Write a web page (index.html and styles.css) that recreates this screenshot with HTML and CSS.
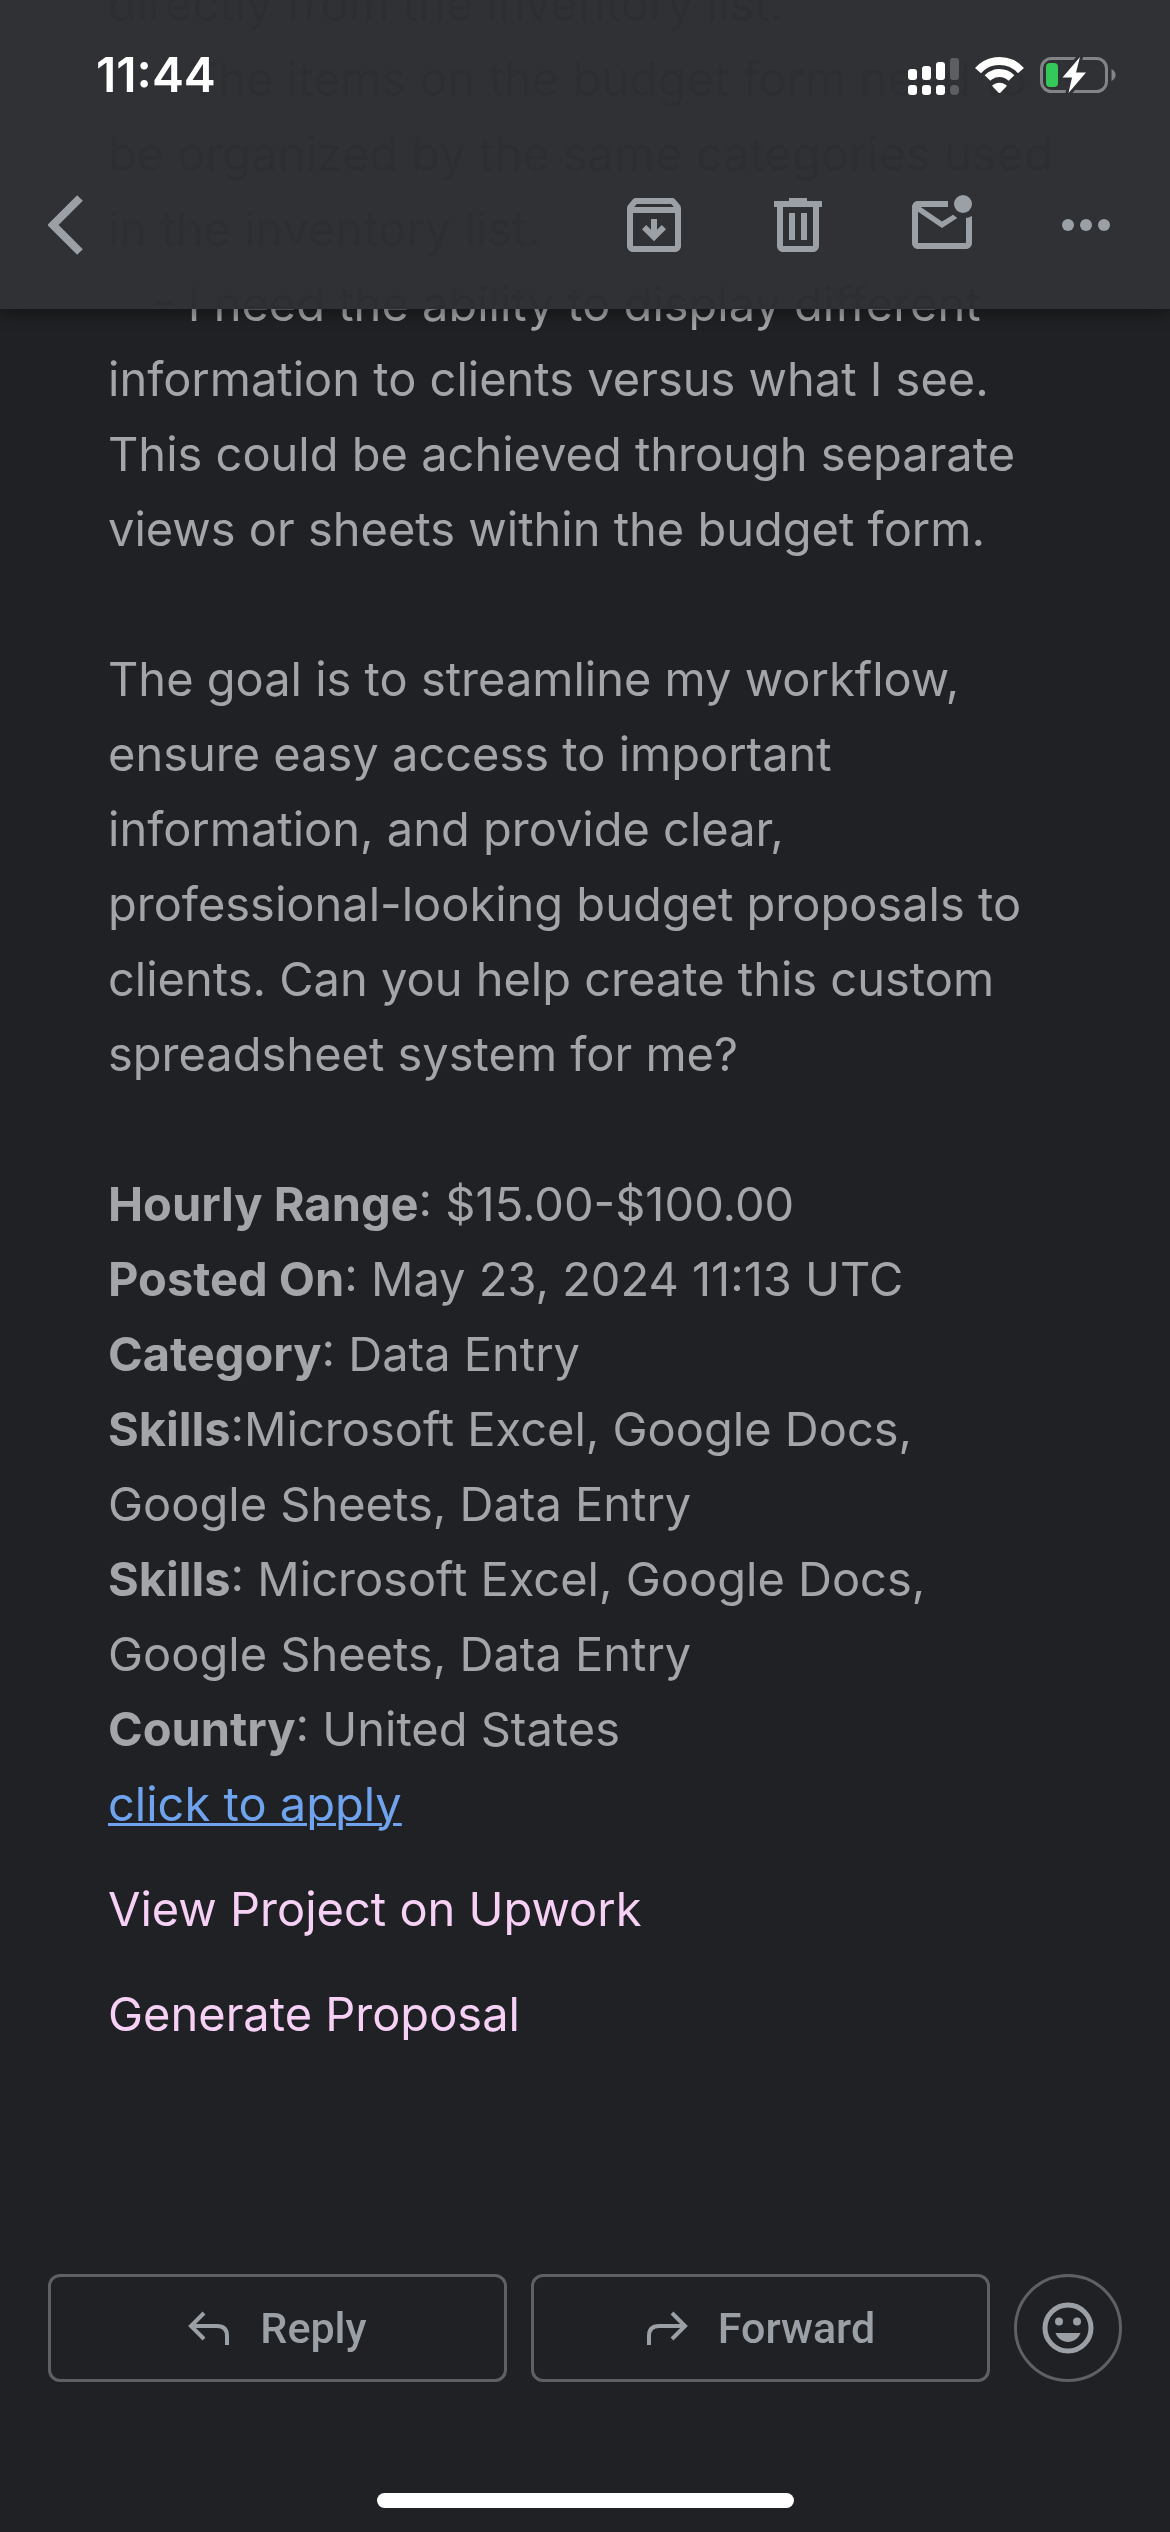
FILE: index.html
```html
<!DOCTYPE html>
<html lang="en">

<head>
    <meta charset="UTF-8">
    <meta name="viewport" content="width=device-width, initial-scale=1.0">
    <title>Mail</title>
    <link rel="stylesheet" href="styles.css">
</head>

<body>
    <header class="top">
        <div class="status">
            <time class="clock">11:44</time>
            <div class="status-icons">
                <svg class="signal" viewBox="0 0 51 38" aria-hidden="true">
                    <rect x="0" y="13" width="9" height="11" rx="3" />
                    <rect x="14" y="10" width="9" height="14" rx="3" />
                    <rect x="28" y="6" width="9" height="18" rx="3" />
                    <rect class="off" x="42" y="2" width="9" height="22" rx="3" />
                    <rect x="0" y="29" width="9" height="10" rx="3" />
                    <rect x="14" y="29" width="9" height="10" rx="3" />
                    <rect x="28" y="29" width="9" height="10" rx="3" />
                    <rect class="off" x="42" y="29" width="9" height="10" rx="4" />
                </svg>
                <svg class="wifi" viewBox="0 0 49 38" aria-hidden="true">
                    <path class="arc" d="M3 14.6A29 29 0 0 1 46 14.6M12.5 22A17 17 0 0 1 36.5 22" />
                    <path d="M25.6 36.4L31.4 30.4Q32 29.6 31.2 29Q24.5 24.4 17.8 29Q17 29.6 17.6 30.4L23.4 36.4Q24.5 37.6 25.6 36.4Z" />
                </svg>
                <svg class="battery" viewBox="0 0 76 40" aria-hidden="true">
                    <rect class="shell" x="1.5" y="3.5" width="65" height="33" rx="10" />
                    <path class="nub" d="M71.5 14C77 17 77 23 71.5 26Z" />
                    <rect class="level" x="6" y="8" width="12" height="24" rx="4" />
                    <path class="bolt" d="M40 2L22.5 22.5H32L28.5 38L46 17.5H36Z" />
                </svg>
            </div>
        </div>
        <nav class="toolbar">
            <button class="icon-btn back" aria-label="Back">
                <svg viewBox="0 0 36 60"><path d="M32 3L5 30L32 57" /></svg>
            </button>
            <div class="actions">
                <button class="icon-btn" aria-label="Archive">
                    <svg viewBox="0 0 24 24"><path d="M20.54 5.23l-1.39-1.68C18.88 3.21 18.47 3 18 3H6c-.47 0-.88.21-1.16.55L3.46 5.23C3.17 5.57 3 6.02 3 6.5V19c0 1.1.9 2 2 2h14c1.1 0 2-.9 2-2V6.5c0-.48-.17-.93-.46-1.27zM6.24 5h11.52l.83 1H5.42l.82-1zM5 19V8h14v11H5zm8-9h-2v3.6L9.4 12 8 13.4l4 4 4-4-1.4-1.4-1.6 1.6z" /></svg>
                </button>
                <button class="icon-btn" aria-label="Delete">
                    <svg viewBox="0 0 24 24"><path d="M15 4V3H9v1H4v2h1v13c0 1.1.9 2 2 2h10c1.1 0 2-.9 2-2V6h1V4h-5zm2 15H7V6h10v13zM9 8h2v9H9zm4 0h2v9h-2z" /></svg>
                </button>
                <button class="icon-btn" aria-label="Mark as unread">
                    <svg viewBox="0 0 24 24"><path d="M22 8.98V18c0 1.1-.9 2-2 2H4c-1.1 0-2-.9-2-2V6c0-1.1.9-2 2-2h10v2H4.9L12 10.8l3.7-2.2 1.4 1.1L12 13 4 7.6V18h16V9.7c.7-.15 1.4-.4 2-.72z" /><circle cx="19" cy="5" r="3" /></svg>
                </button>
                <button class="icon-btn" aria-label="More options">
                    <svg viewBox="0 0 24 24"><circle cx="6" cy="12" r="2" /><circle cx="12" cy="12" r="2" /><circle cx="18" cy="12" r="2" /></svg>
                </button>
            </div>
        </nav>
    </header>

    <main class="mail">
        <p>directly from the inventory list.</p>
        <p class="item">- The items on the budget form need to be organized by the same categories used in the inventory list.</p>
        <p class="item">- I need the ability to display different information to clients versus what I see. This could be achieved through separate views or sheets within the budget form.</p>

        <p class="goal">The goal is to streamline my workflow, ensure easy access to important information, and provide clear, professional-looking budget proposals to clients. Can you help create this custom spreadsheet system for me?</p>

        <p><b>Hourly Range</b>: $15.00-$100.00</p>
        <p><b>Posted On</b>: May 23, 2024 11:13 UTC</p>
        <p><b>Category</b>: Data Entry</p>
        <p><b>Skills</b>:Microsoft Excel, Google Docs, Google Sheets, Data Entry</p>
        <p><b>Skills</b>: Microsoft Excel, Google Docs, Google Sheets, Data Entry</p>
        <p><b>Country</b>: United States</p>
        <p><a class="apply" href="#">click to apply</a></p>
        <p class="more"><a href="#">View Project on Upwork</a></p>
        <p class="more"><a href="#">Generate Proposal</a></p>
    </main>

    <footer class="bottom">
        <div class="replies">
            <button class="reply-btn">
                <svg viewBox="0 0 42 34" aria-hidden="true"><path d="M16 2L3 15L16 28M3 15H29Q39 15 39 25V34" /></svg>
                Reply
            </button>
            <button class="reply-btn">
                <svg viewBox="0 0 42 34" aria-hidden="true"><path d="M26 2L39 15L26 28M39 15H13Q3 15 3 25V34" /></svg>
                Forward
            </button>
            <button class="emoji-btn" aria-label="Add reaction">
                <svg viewBox="0 0 52 52">
                    <circle class="face" cx="26" cy="26" r="23" />
                    <circle cx="17" cy="19.5" r="4" />
                    <circle cx="35" cy="19.5" r="4" />
                    <path d="M13.5 31H38.5C36.5 36.500 31.500 40 26 40S15.500 36.500 13.500 31Z" />
                </svg>
            </button>
        </div>
        <div class="home-bar"></div>
    </footer>
</body>

</html>
```

FILE: styles.css
```css
* {
    margin: 0;
    padding: 0;
    box-sizing: border-box;
}

body {
    display: flex;
    flex-direction: column;
    min-height: 100vh;
    background-color: #202124;
    color: #a4a5a8;
    font-family: Inter, "Liberation Sans", sans-serif;
}

button {
    border: none;
    background: none;
    color: inherit;
    font: inherit;
}

svg {
    display: block;
    fill: currentColor;
}

/* header stays above the scrolled message, text under it shows as a dark ghost */
.top {
    position: fixed;
    top: 0;
    left: 0;
    right: 0;
    background-color: rgba(45, 46, 49, 0.985);
    backdrop-filter: invert(1);
    box-shadow: 0 4px 16px rgba(0, 0, 0, 0.4);
}

.status {
    display: flex;
    justify-content: space-between;
    align-items: center;
    height: 149px;
    padding: 0 54px 0 96px;
    color: #fff;
}

.clock {
    font-size: 48px;
    font-weight: 600;
}

.status-icons {
    display: flex;
    align-items: center;
    gap: 16px;
}

.signal {
    width: 51px;
    height: 38px;
    overflow: visible;
}

.signal .off {
    fill: #5d5e61;
}

.wifi {
    width: 49px;
    height: 38px;
}

.wifi .arc {
    fill: none;
    stroke: currentColor;
    stroke-width: 8;
}

.battery {
    width: 76px;
    height: 40px;
}

.battery .shell {
    fill: none;
    stroke: #838487;
    stroke-width: 3;
}

.battery .nub {
    fill: #838487;
}

.battery .level {
    fill: #34c759;
}

.battery .bolt {
    stroke: #303134;
    stroke-width: 6;
    stroke-linejoin: round;
    paint-order: stroke;
}

.toolbar {
    display: flex;
    justify-content: space-between;
    padding: 40px 48px 48px;
    color: #9aa0a6;
}

.actions {
    display: flex;
    gap: 72px;
}

.icon-btn svg {
    width: 72px;
    height: 72px;
}

.back svg {
    width: 36px;
    height: 60px;
    fill: none;
    stroke: currentColor;
    stroke-width: 8;
}

/* message is scrolled part way through its first line */
.mail {
    flex: 1;
    margin-top: -34px;
    padding: 0 108px;
    font-size: 47px;
    line-height: 75px;
}

.item {
    text-indent: 45px;
}

.goal {
    margin: 75px 0;
}

.apply {
    color: #6fa3ee;
    text-decoration-thickness: 3px;
}

.more {
    margin-top: 30px;
}

.more a {
    color: #f6d0f5;
    text-decoration: none;
}

.bottom {
    padding: 0 48px 24px;
}

.replies {
    display: flex;
    gap: 24px;
    height: 108px;
}

.reply-btn {
    display: flex;
    flex: 1;
    align-items: center;
    justify-content: center;
    gap: 30px;
    border: 3px solid #5f6064;
    border-radius: 12px;
    color: #9aa0a6;
    font-family: Roboto, "Liberation Sans", sans-serif;
    font-size: 43px;
    font-weight: 500;
}

.reply-btn svg {
    width: 42px;
    height: 34px;
    fill: none;
    stroke: currentColor;
    stroke-width: 4;
}

.emoji-btn {
    display: flex;
    align-items: center;
    justify-content: center;
    width: 108px;
    border: 3px solid #5f6064;
    border-radius: 50%;
    color: #9aa0a6;
}

.emoji-btn svg {
    width: 52px;
    height: 52px;
}

.emoji-btn .face {
    fill: none;
    stroke: currentColor;
    stroke-width: 5;
}

.home-bar {
    width: 417px;
    height: 15px;
    margin: 111px auto 0;
    border-radius: 8px;
    background-color: #fff;
}
```
